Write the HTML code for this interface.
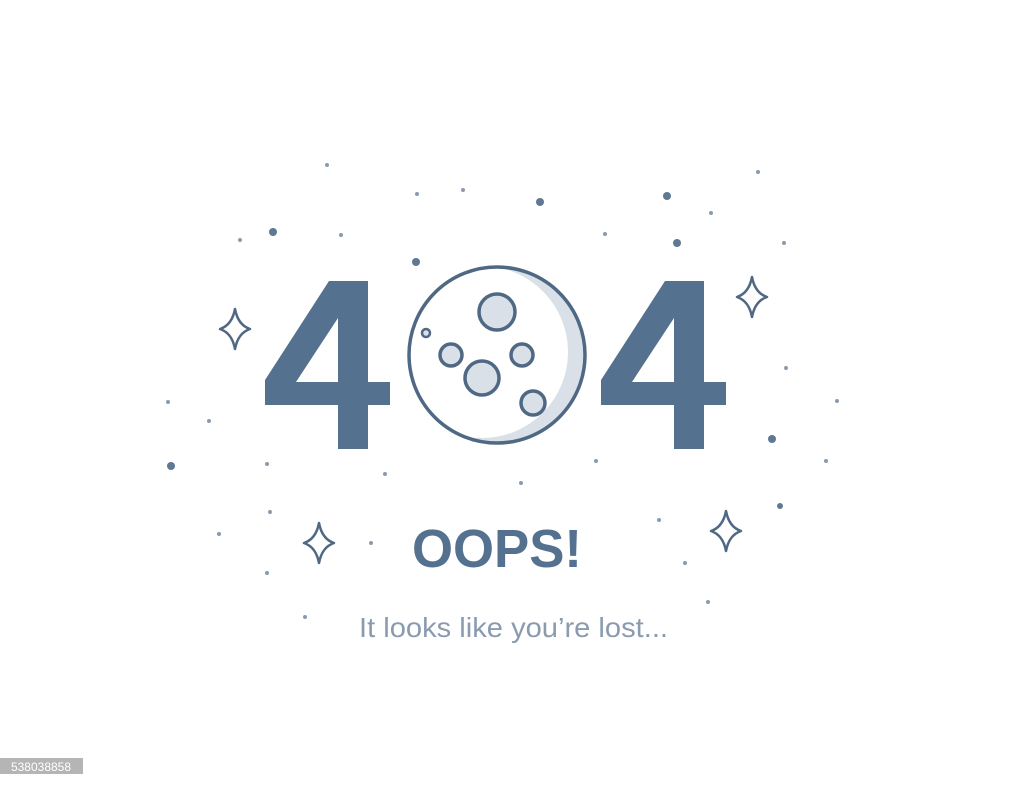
<!DOCTYPE html>
<html><head><meta charset="utf-8"><style>
html,body{margin:0;padding:0;background:#fff;width:1024px;height:787px;overflow:hidden}
</style></head><body>
<svg width="1024" height="787" viewBox="0 0 1024 787" xmlns="http://www.w3.org/2000/svg">
<defs>
<path id="four" fill-rule="evenodd" d="M329 281 L368 281 L368 382 L390 382 L390 405 L368 405 L368 449 L338 449 L338 405 L265 405 L265 380 Z M296 382 L338 382 L338 318 Z"/>
<path id="spark" d="M0 -20 Q3 -4 15 0 Q3 4 0 20 Q-3 4 -15 0 Q-3 -4 0 -20 Z" fill="none" stroke="#4f6883" stroke-width="2.5" stroke-linejoin="round"/>
<clipPath id="mc"><circle cx="497" cy="355" r="88"/></clipPath>
</defs>
<g fill="#54718f">
<use href="#four"/>
<use href="#four" transform="translate(336,0)"/>
</g>
<!-- moon -->
<circle cx="497" cy="355" r="88" fill="#d9e0e8"/>
<circle cx="482" cy="352" r="86" fill="#fff" clip-path="url(#mc)"/>
<circle cx="497" cy="355" r="88" fill="none" stroke="#4f6883" stroke-width="3.5"/>
<g fill="#d9e0e8" stroke="#4f6883" stroke-width="3.5">
<circle cx="497" cy="312" r="18"/>
<circle cx="426" cy="333" r="4" stroke-width="2.5"/>
<circle cx="451" cy="355" r="11"/>
<circle cx="522" cy="355" r="11"/>
<circle cx="482" cy="378" r="17"/>
<circle cx="533" cy="403" r="12"/>
</g>
<!-- sparkles -->
<use href="#spark" transform="translate(752,297)"/>
<use href="#spark" transform="translate(235,329)"/>
<use href="#spark" transform="translate(319,543)"/>
<use href="#spark" transform="translate(726,531)"/>
<!-- dots -->
<g fill="#8a9bb0">
<circle cx="327" cy="165" r="2"/><circle cx="417" cy="194" r="2"/><circle cx="463" cy="190" r="2"/>
<circle cx="758" cy="172" r="2"/><circle cx="711" cy="213" r="2"/><circle cx="240" cy="240" r="2"/>
<circle cx="341" cy="235" r="2"/><circle cx="605" cy="234" r="2"/><circle cx="784" cy="243" r="2"/>
<circle cx="168" cy="402" r="2"/><circle cx="209" cy="421" r="2"/><circle cx="786" cy="368" r="2"/>
<circle cx="837" cy="401" r="2"/><circle cx="826" cy="461" r="2"/><circle cx="267" cy="464" r="2"/>
<circle cx="385" cy="474" r="2"/><circle cx="596" cy="461" r="2"/><circle cx="521" cy="483" r="2"/>
<circle cx="270" cy="512" r="2"/><circle cx="219" cy="534" r="2"/><circle cx="371" cy="543" r="2"/>
<circle cx="659" cy="520" r="2"/><circle cx="685" cy="563" r="2"/><circle cx="267" cy="573" r="2"/>
<circle cx="305" cy="617" r="2"/><circle cx="708" cy="602" r="2"/>
</g>
<g fill="#5f7893">
<circle cx="273" cy="232" r="4"/><circle cx="540" cy="202" r="4"/><circle cx="667" cy="196" r="4"/>
<circle cx="677" cy="243" r="4"/><circle cx="416" cy="262" r="4"/><circle cx="171" cy="466" r="4"/>
<circle cx="772" cy="439" r="4"/><circle cx="780" cy="506" r="3"/>
</g>
<text x="412" y="567" textLength="170" lengthAdjust="spacingAndGlyphs" font-family="Liberation Sans, sans-serif" font-weight="bold" font-size="54" fill="#54718f">OOPS!</text>
<text x="359" y="637" textLength="309" lengthAdjust="spacingAndGlyphs" font-family="Liberation Sans, sans-serif" font-size="28" fill="#8a9bb0">It looks like you’re lost...</text>
<rect x="0" y="758" width="83" height="16" fill="#b5b5b5"/>
<text x="41" y="771" text-anchor="middle" font-family="Liberation Sans, sans-serif" font-size="12" fill="#fff">538038858</text>
</svg>
</body></html>
